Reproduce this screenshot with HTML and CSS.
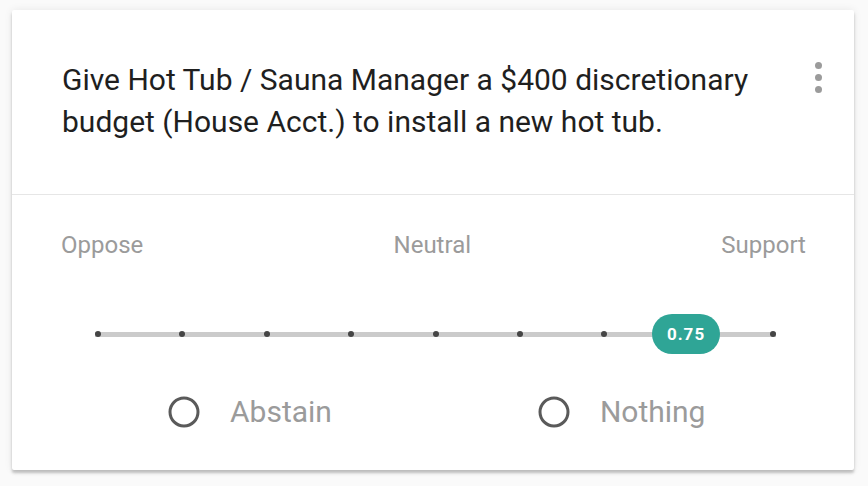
FILE: index.html
```html
<!DOCTYPE html>
<html lang="en">
<head>
<meta charset="utf-8">
<title>Proposal</title>
<link rel="stylesheet" href="styles.css">
</head>
<body>
<div class="card">
  <div class="head">
    <p class="title">Give Hot Tub / Sauna Manager a $400 discretionary budget (House Acct.) to install a new hot tub.</p>
    <div class="menu" aria-label="More options"><span></span><span></span><span></span></div>
  </div>
  <div class="scale">
    <div class="labels">
      <span>Oppose</span>
      <span>Neutral</span>
      <span>Support</span>
    </div>
    <div class="slider">
      <div class="track">
        <span class="tick"></span><span class="tick"></span><span class="tick"></span>
        <span class="tick"></span><span class="tick"></span><span class="tick"></span>
        <span class="tick"></span><span class="tick"></span><span class="tick"></span>
      </div>
      <div class="thumb" style="left: 81.8%">0.75</div>
    </div>
    <div class="radios">
      <label class="radio">
        <svg width="36" height="36" viewBox="0 0 36 36"><circle cx="18" cy="18" r="14" fill="none" stroke="#5a5a5a" stroke-width="3"/></svg>
        <span>Abstain</span>
      </label>
      <label class="radio">
        <svg width="36" height="36" viewBox="0 0 36 36"><circle cx="18" cy="18" r="14" fill="none" stroke="#5a5a5a" stroke-width="3"/></svg>
        <span>Nothing</span>
      </label>
    </div>
  </div>
</div>
</body>
</html>
```

FILE: styles.css
```css
html, body {
  margin: 0;
  padding: 0;
  background: #fafafa;
}

body {
  padding: 10px 14px 16px 12px;
  font-family: Roboto, "Liberation Sans", sans-serif;
}

.card {
  width: 842px;
  background: #ffffff;
  border-radius: 2px;
  box-shadow: 0 0 8px rgba(0, 0, 0, 0.08), 0 3px 3px rgba(0, 0, 0, 0.22);
}

.head {
  display: flex;
  align-items: flex-start;
  padding: 49px 32px 51px 50px;
  border-bottom: 1px solid #e6e6e6;
}

.title {
  flex: 1;
  margin: 0;
  padding-right: 30px;
  font-size: 30px;
  line-height: 42px;
  color: #1f1f1f;
}

.menu {
  display: flex;
  flex-direction: column;
  gap: 5px;
  margin-top: 3px;
}

.menu span {
  width: 7px;
  height: 7px;
  border-radius: 50%;
  background: #9b9b9b;
}

.scale {
  padding: 36px 48px 40px 49px;
}

.labels {
  display: flex;
  justify-content: space-between;
  font-size: 24px;
  line-height: 28px;
  color: #9b9b9b;
}

.slider {
  position: relative;
  margin: 55px 30px 0 34px;
  height: 40px;
}

.track {
  display: flex;
  align-items: center;
  justify-content: space-between;
  height: 40px;
  background: linear-gradient(#cbcbcb, #cbcbcb) center / 100% 5px no-repeat;
}

.tick {
  width: 6px;
  height: 6px;
  border-radius: 50%;
  background: #454545;
}

.thumb {
  position: absolute;
  top: 0;
  width: 68px;
  height: 40px;
  border-radius: 20px;
  background: #2fa596;
  color: #ffffff;
  font-size: 17px;
  font-weight: 700;
  letter-spacing: 1px;
  line-height: 40px;
  text-align: center;
}

.radios {
  display: flex;
  gap: 204px;
  margin-top: 40px;
  padding-left: 105px;
}

.radio {
  display: flex;
  align-items: center;
  gap: 28px;
  font-size: 30px;
  line-height: 36px;
  color: #9b9b9b;
}

.radio svg {
  display: block;
}
```
